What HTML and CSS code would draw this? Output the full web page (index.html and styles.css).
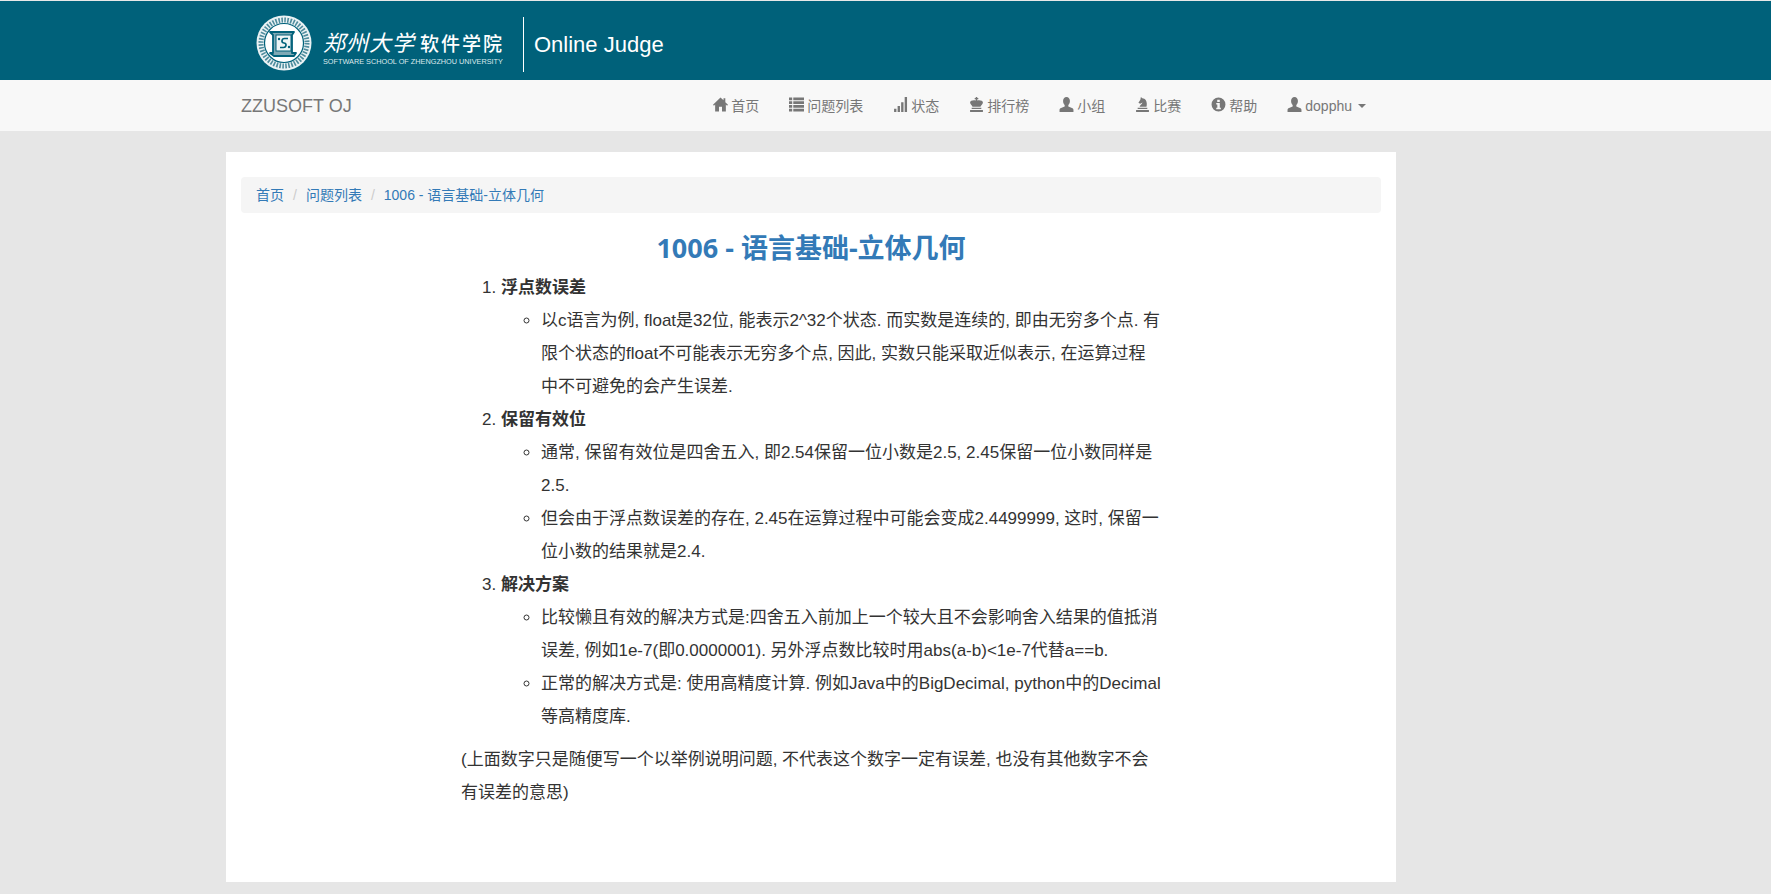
FILE: index.html
```html
<!DOCTYPE html>
<html lang="zh">
<head>
<meta charset="utf-8">
<title>1006 - 语言基础-立体几何</title>
<link rel="stylesheet" href="styles.css">
</head>
<body>
<svg class="defs" width="0" height="0" aria-hidden="true">
  <symbol id="i-home" viewBox="0 0 14 14"><path d="M7 .5 0 7.200l.9.900L2 7.100V13.500h3.600V9h2.800v4.500H12V7.100l1.100 1 .9-.9L11.500 4.800V1.200H9.800v1.900z"/></symbol>
  <symbol id="i-list" viewBox="0 0 14 14"><path d="M0 .5h3v2.600H0zM4 .5h10v2.600H4zM0 4h3v2.600H0zM4 4h10v2.600H4zM0 7.500h3v2.600H0zM4 7.500h10v2.600H4zM0 11h3v2.600H0zM4 11h10v2.600H4z"/></symbol>
  <symbol id="i-signal" viewBox="0 0 14 14"><path d="M1 11h2.200v3H1zM4.300 8.500h2.200V14H4.300zM7.600 5h2.200v9H7.600zM10.900 0h2.200v14h-2.200z"/></symbol>
  <symbol id="i-king" viewBox="0 0 14 14"><path d="M6.300 0h1.400v1h1v1.200h-1v1c2.300-.6 5.300.1 5.300 2 0 1.500-1.500 2.400-2.300 3.800H3.300C2.500 7.600 1 6.700 1 5.200c0-1.900 3-2.600 5.300-2v-1h-1V1h1zM2.500 10h9v1.300h-9zM1 12.200h12V14H1z"/></symbol>
  <symbol id="i-user" viewBox="0 0 14 14"><path d="M7 0c2 0 3.200 1.600 3.200 3.800 0 1.500-.6 2.900-1.500 3.700v1.300l3.400 1.500c.8.400 1.400 1 1.400 1.900V14H.5v-1.800c0-.9.600-1.500 1.400-1.900l3.400-1.500V7.500C4.400 6.700 3.800 5.300 3.800 3.800 3.800 1.600 5 0 7 0z"/></symbol>
  <symbol id="i-knight" viewBox="0 0 14 14"><path d="M5.500 0l1.300 1.200C9.600 1.400 11 3.800 11 6.300c0 1 0 2-.3 2.900H4.300c.1-1.600 2.200-2.300 2.700-4L4.800 6.200 3.200 5.300 5 2.500zM2.500 10h9v1.300h-9zM1 12.200h12V14H1z"/></symbol>
  <symbol id="i-info" viewBox="0 0 14 14"><path fill-rule="evenodd" d="M7 .5a6.500 6.500 0 1 0 0 13 6.500 6.500 0 0 0 0-13zM5.800 2.600h2.400v2H5.800zM4.900 5.700h3.300v4.400h1v1.400H4.900v-1.400h1V7.100h-1z"/></symbol>
</svg>

<header class="banner">
  <div class="banner-inner">
    <svg class="seal" viewBox="0 0 56 56" aria-hidden="true">
      <circle cx="28" cy="28" r="27.500" fill="#eaf2f4"/>
      <circle cx="28" cy="28" r="23" fill="none" stroke="#4f8c9d" stroke-width="5" stroke-dasharray="1.600 1.400"/>
      <circle cx="28" cy="28" r="19.500" fill="#fff" stroke="#00617a" stroke-width="1.200"/>
      <path d="M14 17h24l-2 3v18h4l-2 3H18l-4-3h3V20z" fill="#7fa9b5" stroke="#00617a" stroke-width="1.800" stroke-linejoin="round"/>
      <rect x="20" y="20" width="15" height="16" fill="#eef5f6" stroke="#00617a" stroke-width="1"/>
      <path d="M32 23.500h-3.500c-3 0-3.500 4.500-.5 4.500s2.500 4.500-.5 4.500H24" fill="none" stroke="#00617a" stroke-width="1.700"/>
      <circle cx="23" cy="24" r="1.200" fill="#00617a"/>
      <circle cx="33" cy="32" r="1.200" fill="#00617a"/>
    </svg>
    <div class="wordmark">
      <div class="wordmark-zh"><span class="wordmark-hand">郑州大学</span><span class="wordmark-dept">软件学院</span></div>
      <div class="wordmark-en">SOFTWARE SCHOOL OF ZHENGZHOU UNIVERSITY</div>
    </div>
    <div class="banner-title">Online Judge</div>
  </div>
</header>

<nav class="navbar">
  <div class="navbar-inner">
    <a class="brand" href="#">ZZUSOFT OJ</a>
    <ul class="nav">
      <li><a href="#"><svg class="ico"><use href="#i-home"/></svg>首页</a></li>
      <li><a href="#"><svg class="ico"><use href="#i-list"/></svg>问题列表</a></li>
      <li><a href="#"><svg class="ico"><use href="#i-signal"/></svg>状态</a></li>
      <li><a href="#"><svg class="ico"><use href="#i-king"/></svg>排行榜</a></li>
      <li><a href="#"><svg class="ico"><use href="#i-user"/></svg>小组</a></li>
      <li><a href="#"><svg class="ico"><use href="#i-knight"/></svg>比赛</a></li>
      <li><a href="#"><svg class="ico"><use href="#i-info"/></svg>帮助</a></li>
      <li><a href="#"><svg class="ico"><use href="#i-user"/></svg>dopphu<span class="caret"></span></a></li>
    </ul>
  </div>
</nav>

<main class="container">
  <ol class="breadcrumb">
    <li><a href="#">首页</a></li>
    <li><a href="#">问题列表</a></li>
    <li><a href="#">1006 - 语言基础-立体几何</a></li>
  </ol>
  <h1 class="title">1006 - 语言基础-立体几何</h1>
  <article class="content">
    <ol class="topics">
      <li><strong>浮点数误差</strong>
        <ul>
          <li>以c语言为例, float是32位, 能表示2^32个状态. 而实数是连续的, 即由无穷多个点. 有限个状态的float不可能表示无穷多个点, 因此, 实数只能采取近似表示, 在运算过程<br>中不可避免的会产生误差.</li>
        </ul>
      </li>
      <li><strong>保留有效位</strong>
        <ul>
          <li>通常, 保留有效位是四舍五入, 即2.54保留一位小数是2.5, 2.45保留一位小数同样是2.5.</li>
          <li>但会由于浮点数误差的存在, 2.45在运算过程中可能会变成2.4499999, 这时, 保留一位小数的结果就是2.4.</li>
        </ul>
      </li>
      <li><strong>解决方案</strong>
        <ul>
          <li>比较懒且有效的解决方式是:四舍五入前加上一个较大且不会影响舍入结果的值抵消误差, 例如1e-7(即0.0000001). 另外浮点数比较时用abs(a-b)&lt;1e-7代替a==b.</li>
          <li>正常的解决方式是: 使用高精度计算. 例如Java中的BigDecimal, python中的Decimal等高精度库.</li>
        </ul>
      </li>
    </ol>
    <p class="note">(上面数字只是随便写一个以举例说明问题, 不代表这个数字一定有误差, 也没有其他数字不会有误差的意思)</p>
  </article>
</main>
</body>
</html>
```
FILE: styles.css
```css
* { box-sizing: border-box; }
html, body { margin: 0; padding: 0; }
body {
  background: #e6e6e6;
  color: #333;
  font-family: "Liberation Sans", "Noto Sans CJK SC", sans-serif;
  font-size: 14px;
  line-height: 20px;
  overflow: hidden;
  height: 894px;
}
a { text-decoration: none; color: inherit; }
.defs { position: absolute; }

.banner { background: #00617a; height: 80px; border-top: 1px solid #e8e8e8; }
.banner-inner { width: 1170px; margin-left: 226px; padding: 7px 0 0 30px; height: 79px; display: flex; align-items: center; }
.seal { width: 56px; height: 56px; flex: none; margin-top: -2px; }
.wordmark { width: 181px; margin-left: 11px; color: #fff; display: flex; flex-direction: column; }
.wordmark-zh { display: flex; align-items: center; height: 35px; padding-top: 5px; white-space: nowrap; }
.wordmark-hand { font-family: "Noto Sans CJK SC", sans-serif; font-size: 22px; font-style: italic; letter-spacing: 1px; width: 97px; line-height: 26px; }
.wordmark-dept { font-family: "Noto Sans CJK SC", sans-serif; font-size: 19px; font-weight: 500; width: 84px; letter-spacing: 2px; line-height: 24px; margin-top: 4px; }
.wordmark-en { font-size: 7.300px; line-height: 11px; white-space: nowrap; color: #dce9ec; }
.banner-title {
  margin-left: 19px; padding-left: 10px; height: 55px; border-left: 1px solid #fff;
  color: #fff; font-size: 22px; line-height: 55px; white-space: nowrap;
}

.navbar { background: #f8f8f8; height: 51px; }
.navbar-inner { width: 1170px; margin-left: 226px; padding: 0 15px; height: 51px; display: flex; align-items: center; justify-content: space-between; }
.brand { color: #777; font-size: 18px; line-height: 20px; }
.nav { list-style: none; margin: 0; padding: 0; display: flex; }
.nav a { display: flex; align-items: center; color: #777; padding: 15px; height: 50px; white-space: nowrap; }
.ico { width: 15px; height: 15px; fill: #777; margin-right: 3px; flex: none; margin-top: -3px; }
.caret {
  display: inline-block; margin-left: 6px; width: 0; height: 0;
  border-top: 4px solid #777; border-left: 4px solid transparent; border-right: 4px solid transparent;
}

.container { width: 1170px; margin: 21px 0 0 226px; background: #fff; padding: 25px 15px 0; height: 730px; }
.breadcrumb {
  list-style: none; margin: 0; padding: 8px 15px; background: #f5f5f5; border-radius: 4px;
  display: flex; height: 36px; font-size: 14px;
}
.breadcrumb a { color: #337ab7; }
.breadcrumb li + li::before { content: "/"; color: #ccc; padding: 0 9px; }

.title {
  margin: 17px 0 0; text-align: center; color: #337ab7;
  font-family: "Open Sans", "Noto Sans CJK SC", sans-serif;
  font-size: 27px; font-weight: 700; line-height: 36px;
}
.content { width: 702px; margin: 5px 0 0 220px; font-size: 17px; line-height: 33px; }
.topics { margin: 0; padding: 0 0 0 40px; }
.topics ul { margin: 0; padding: 0 0 0 40px; list-style: circle; }
.note { margin: 10px 0 0; }
```
